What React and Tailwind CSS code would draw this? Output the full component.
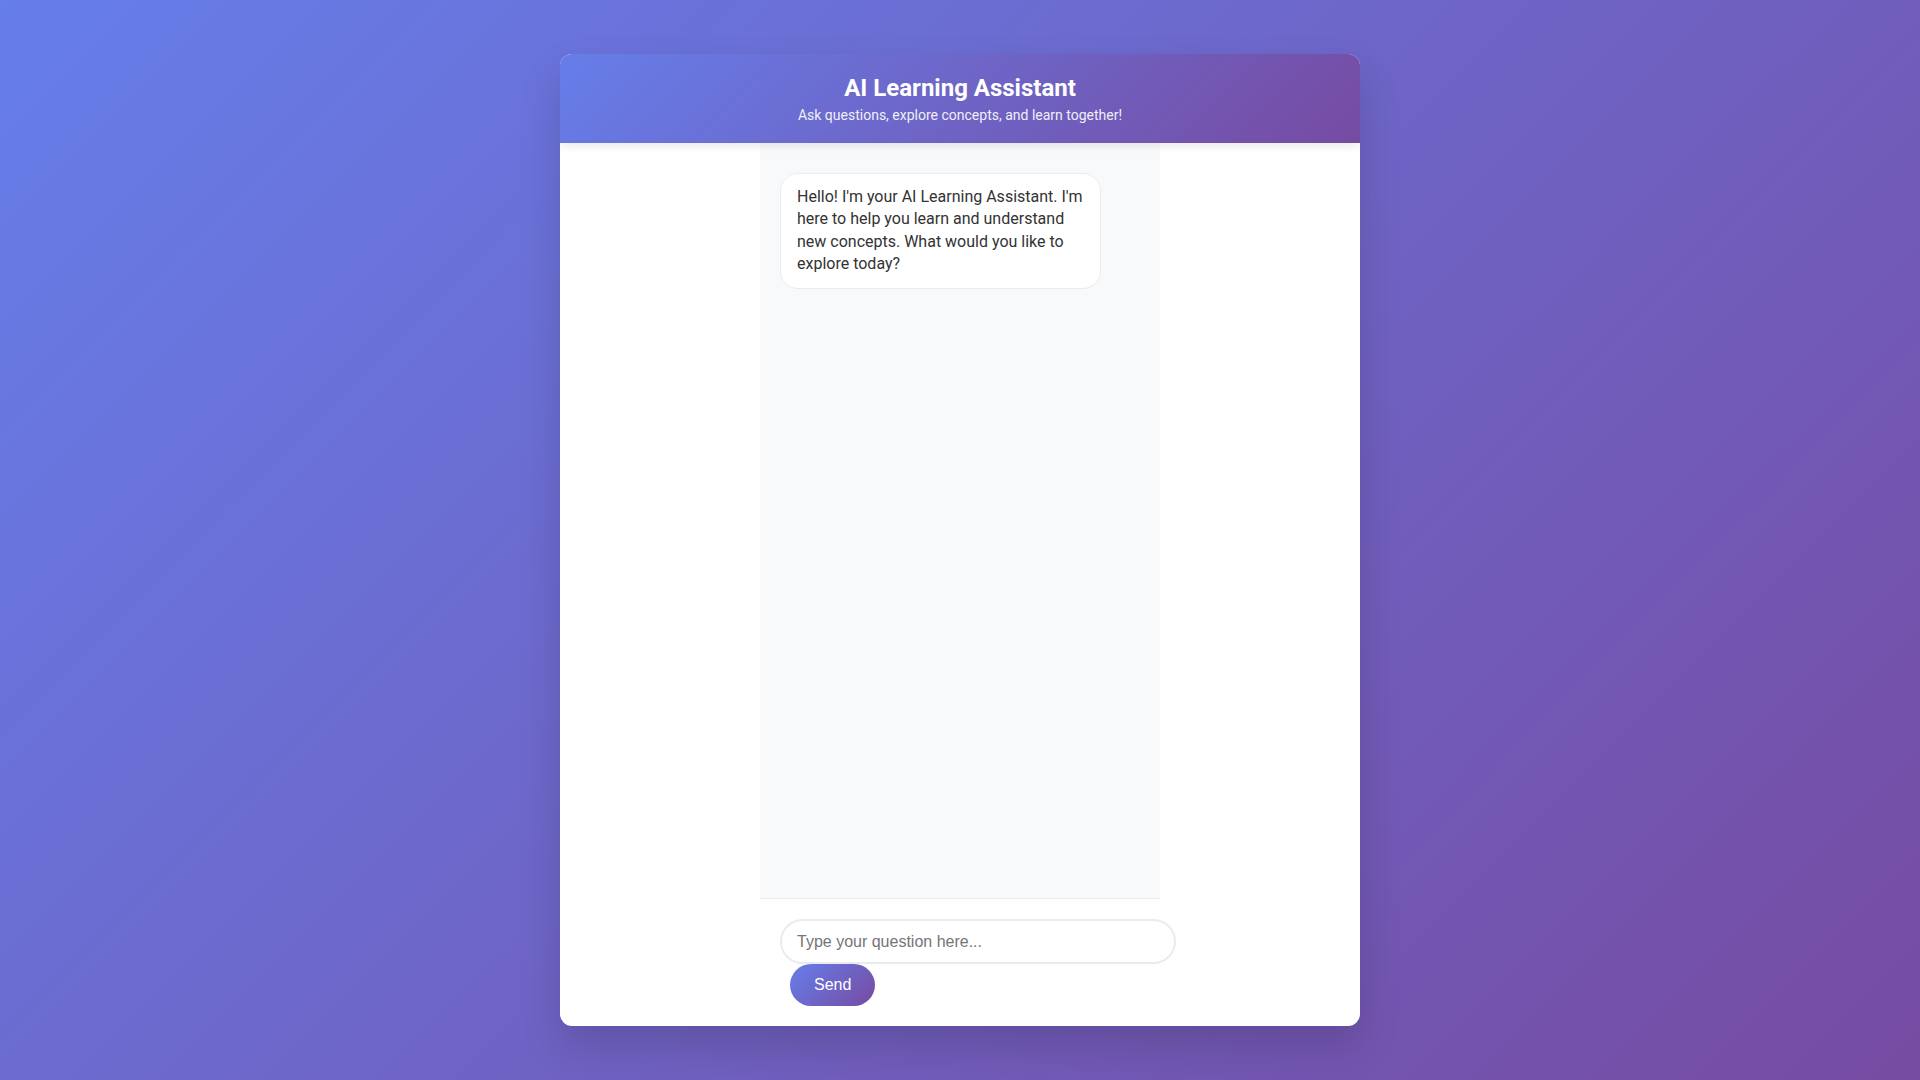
export default function App() {
  return (
    <div className="h-screen w-full flex items-center justify-center bg-[linear-gradient(135deg,#667eea_0%,#764ba2_100%)] font-['Roboto',sans-serif]">
      {/* chat card */}
      <div className="w-[800px] h-[90vh] bg-white rounded-[12px] overflow-hidden flex flex-col shadow-[0_20px_40px_rgba(0,0,0,0.15)]">
        {/* header */}
        <div className="relative z-10 bg-[linear-gradient(135deg,#667eea_0%,#764ba2_100%)] text-white text-center px-5 pt-5 pb-[19px] shadow-[0_2px_10px_rgba(0,0,0,0.1)]">
          <h1 className="m-0 text-[24px] leading-[29px] font-bold">AI Learning Assistant</h1>
          <p className="mt-[4px] text-[14px] leading-[17px] opacity-90">
            Ask questions, explore concepts, and learn together!
          </p>
        </div>

        {/* messages */}
        <div className="flex-1 w-[400px] mx-auto bg-[#f8f9fa] border-b border-[#e9ecef] px-5 pt-[30px] overflow-y-auto">
          <div className="max-w-[321px] bg-white border border-[#e9ecef] rounded-[18px] px-4 py-3 text-[16px] leading-[22.4px] text-[#333]">
            Hello! I'm your AI Learning Assistant. I'm here to help you learn and understand new concepts. What would you like to explore today?
          </div>
        </div>

        {/* input */}
        <div className="w-[400px] mx-auto p-5 flex flex-wrap font-['Liberation_Sans',Arial,sans-serif]">
          <input
            type="text"
            placeholder="Type your question here..."
            className="shrink-0 w-[396px] h-[45px] px-[15px] border-2 border-[#e9ecef] rounded-[25px] text-[16px] text-[#333] placeholder:text-[#757575] outline-none"
          />
          <button className="ml-[10px] px-6 py-3 rounded-[25px] text-white text-[16px] leading-[18px] bg-[linear-gradient(135deg,#667eea_0%,#764ba2_100%)]">
            Send
          </button>
        </div>
      </div>
    </div>
  );
}
